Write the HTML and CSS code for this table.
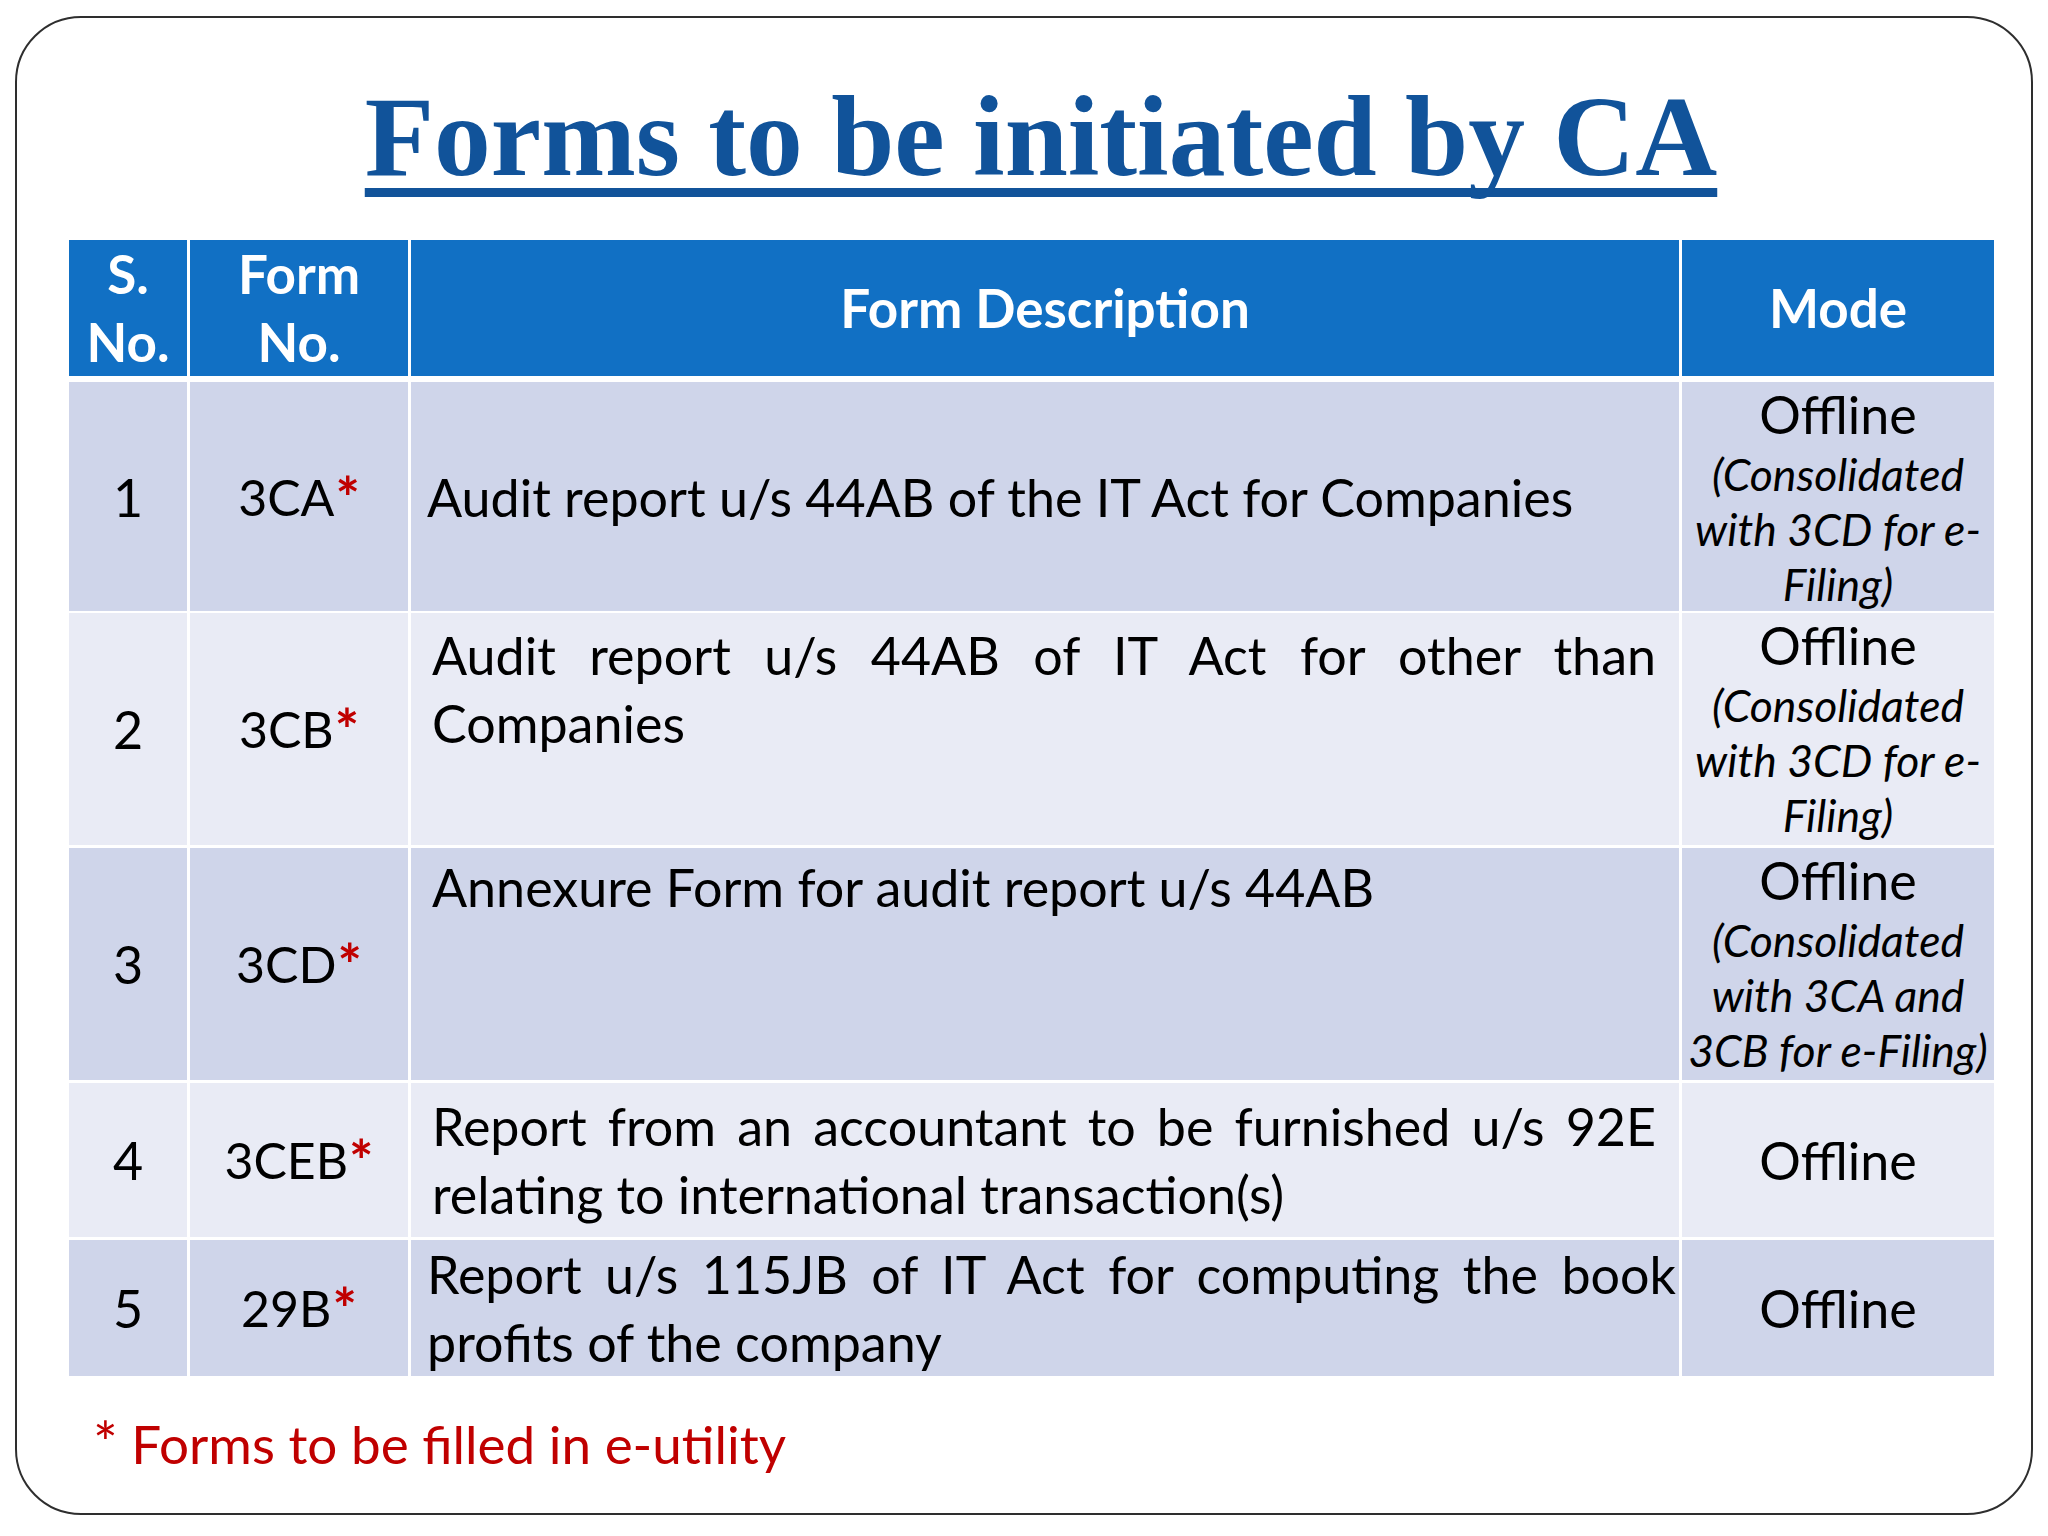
FILE: index.html
```html
<!DOCTYPE html>
<html lang="en">
<head>
<meta charset="utf-8">
<title>Forms to be initiated by CA</title>
<link rel="stylesheet" href="styles.css">
</head>
<body>
<div class="slide">
  <h1 class="title">Forms to be initiated by CA</h1>
  <div class="table">
    <div class="tr thead">
      <div class="th">S.<br>No.</div>
      <div class="th">Form<br>No.</div>
      <div class="th">Form Description</div>
      <div class="th">Mode</div>
    </div>
    <div class="tbody">
      <div class="tr odd r1">
        <div class="td num">1</div>
        <div class="td form">3CA<span class="star">*</span></div>
        <div class="td desc mid"><div>Audit report u/s 44AB of the IT Act for Companies</div></div>
        <div class="td mode top"><div class="main">Offline</div><div class="sub">(Consolidated<br>with 3CD for e-<br>Filing)</div></div>
      </div>
      <div class="tr even r2">
        <div class="td num">2</div>
        <div class="td form">3CB<span class="star">*</span></div>
        <div class="td desc top"><div class="jline">Audit report u/s 44AB of IT Act for other than</div><div>Companies</div></div>
        <div class="td mode top"><div class="main">Offline</div><div class="sub">(Consolidated<br>with 3CD for e-<br>Filing)</div></div>
      </div>
      <div class="tr odd r3">
        <div class="td num">3</div>
        <div class="td form">3CD<span class="star">*</span></div>
        <div class="td desc top"><div>Annexure Form for audit report u/s 44AB</div></div>
        <div class="td mode top"><div class="main">Offline</div><div class="sub">(Consolidated<br>with 3CA and<br>3CB for e-Filing)</div></div>
      </div>
      <div class="tr even r4">
        <div class="td num">4</div>
        <div class="td form">3CEB<span class="star">*</span></div>
        <div class="td desc mid"><div class="jline">Report from an accountant to be furnished u/s 92E</div><div>relating to international transaction(s)</div></div>
        <div class="td mode mid"><div class="main">Offline</div></div>
      </div>
      <div class="tr odd r5">
        <div class="td num">5</div>
        <div class="td form">29B<span class="star">*</span></div>
        <div class="td desc mid"><div class="jline">Report u/s 115JB of IT Act for computing the book</div><div>profits of the company</div></div>
        <div class="td mode mid"><div class="main">Offline</div></div>
      </div>
    </div>
  </div>
  <p class="note"><span class="note-star">*</span> Forms to be filled in e-utility</p>
</div>
</body>
</html>
```

FILE: styles.css
```css
html, body {
  margin: 0;
  padding: 0;
  background: #ffffff;
}

body {
  width: 2048px;
  height: 1536px;
  font-family: "Lato", "Open Sans", sans-serif;
  color: #000000;
}

.slide {
  box-sizing: border-box;
  margin: 16px 15px 0 15px;
  width: 2018px;
  height: 1499px;
  border: 2px solid #2e2e2e;
  border-radius: 66px;
  overflow: hidden;
}

.title {
  margin: 0;
  padding: 62px 0 0 34px;
  text-align: center;
  font-family: "Liberation Serif", "Times New Roman", serif;
  font-weight: bold;
  font-size: 113.5px;
  line-height: 114px;
  color: #11539a;
  text-decoration: underline;
  text-decoration-thickness: 9px;
  text-underline-offset: 13px;
  text-decoration-skip-ink: none;
}

.table {
  margin: 46px 0 0 52px;
  width: 1925px;
}

.tr {
  display: grid;
  grid-template-columns: 118px 218px 1268px 312px;
  column-gap: 3px;
}

.thead {
  height: 133px;
}

.th {
  background: #1170c4;
  color: #ffffff;
  font-weight: bold;
  font-size: 53px;
  line-height: 68px;
  display: flex;
  align-items: center;
  justify-content: center;
  text-align: center;
}

.tbody {
  margin-top: 9px;
  display: flex;
  flex-direction: column;
  gap: 3px;
}

.r1 { height: 228px; }
.r2 { height: 232px; }
.r3 { height: 232px; }
.r4 { height: 154px; }
.r5 { height: 134px; }

.td {
  font-size: 52px;
  line-height: 68px;
  display: flex;
  box-sizing: border-box;
}

.odd .td { background: #cfd5ea; }
.even .td { background: #e9ebf5; }

.num, .form {
  align-items: center;
  justify-content: center;
}

.form {
  font-size: 50px;
}

.star {
  color: #c00000;
  font-weight: bold;
  font-size: 1.15em;
  margin-left: 1px;
}

.desc {
  flex-direction: column;
  padding: 0 23px 0 21px;
}

.desc.mid { justify-content: center; }
.desc.top { justify-content: flex-start; }

.r1 .desc { padding-left: 16px; }
.r2 .desc { padding-top: 8px; }
.r3 .desc { padding-top: 5px; }
.r5 .desc { padding: 0 3px 0 16px; }

.jline {
  text-align: justify;
  text-align-last: justify;
}

.mode {
  flex-direction: column;
  align-items: center;
  text-align: center;
}

.mode.top { justify-content: flex-start; }
.mode.mid { justify-content: center; }

.mode .main {
  line-height: 64px;
}

.sub {
  font-style: italic;
  font-size: 44.5px;
  line-height: 55px;
}

.note {
  margin: 33px 0 0 76px;
  font-size: 53px;
  line-height: 68px;
  color: #c00000;
}

.note-star {
  font-size: 1.1em;
}
```
